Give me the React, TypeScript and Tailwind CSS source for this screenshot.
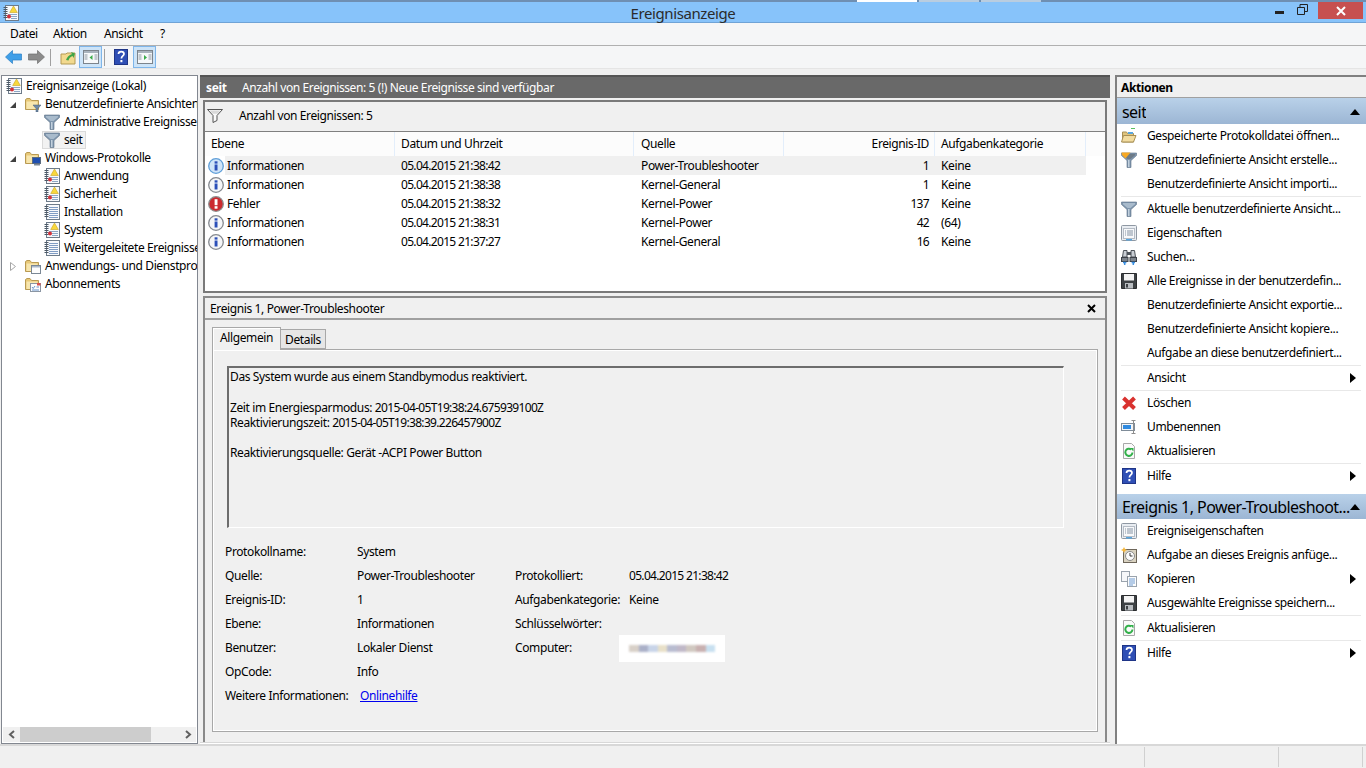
import React from 'react';

const BLUE = '#2b4fb8';

function LogIcon({ alert = false, size = 16 }: { alert?: boolean; size?: number }) {
  return (
    <svg width={size} height={size} viewBox="0 0 16 16" className="shrink-0">
      <rect x="2.5" y="0.5" width="13" height="15" fill="#f7f9fc" stroke="#6d7b8a" />
      <path d="M0.5 2.5h4M0.5 4.5h4M0.5 6.5h4M0.5 8.5h4M0.5 10.5h4M0.5 12.5h4" stroke="#4d5966" />
      {alert ? (
        <>
          <path d="M5 9.5h9M8 11.5h6M8 13.5h6" stroke="#8ea6c4" />
          <path d="M10.5 1l3.800 6.500h-7.600z" fill="#f8d83c" stroke="#c9a21f" strokeWidth="0.6" />
          <circle cx="6" cy="11.500" r="2" fill="#d2313a" />
        </>
      ) : (
        <path d="M5 3.500h9M5 5.500h9M5 7.500h9M5 9.500h9M5 11.500h9M5 13.500h9" stroke="#7f9cc4" />
      )}
    </svg>
  );
}

function FolderBase() {
  return (
    <>
      <path d="M0.5 3.5v10h13v-9h-7l-1.5-2h-3z" fill="#e8c978" stroke="#b99a52" />
      <rect x="1.5" y="5.5" width="11" height="7.5" fill="#f7e6ae" />
    </>
  );
}

function FolderFilter() {
  return (
    <svg width="16" height="16" viewBox="0 0 16 16" className="shrink-0">
      <FolderBase />
      <path d="M8 9h8l-3 3.5V16h-2v-3.5z" fill="#6f8aa6" stroke="#485e75" strokeWidth="0.5" />
    </svg>
  );
}

function FolderPc() {
  return (
    <svg width="16" height="16" viewBox="0 0 16 16" className="shrink-0">
      <FolderBase />
      <rect x="7.5" y="7.5" width="8" height="6" fill="#1f4fb0" stroke="#5a6b80" />
      <rect x="9" y="14" width="6" height="1.5" fill="#7d8894" />
    </svg>
  );
}

function FolderWin() {
  return (
    <svg width="16" height="16" viewBox="0 0 16 16" className="shrink-0">
      <FolderBase />
      <rect x="6.5" y="7.5" width="9" height="8" fill="#fdfdfd" stroke="#7a8794" />
      <rect x="7" y="8" width="8" height="1.5" fill="#a9b8c9" />
    </svg>
  );
}

function FolderCal() {
  return (
    <svg width="16" height="16" viewBox="0 0 16 16" className="shrink-0">
      <FolderBase />
      <rect x="5.5" y="7.5" width="10" height="8" fill="#fdfdfd" stroke="#8b96a3" />
      <rect x="12" y="7" width="3.5" height="2.5" fill="#d9534f" />
      <path d="M7 11l1.2 1.5L10 10M11.5 11h2.5M7 14h7" stroke="#3f77bd" strokeWidth="0.8" fill="none" />
    </svg>
  );
}

function Funnel({ orange = false, dim = false }: { orange?: boolean; dim?: boolean }) {
  if (dim) {
    return (
      <svg width="16" height="16" viewBox="0 0 16 16" className="shrink-0">
        <path d="M0.5 1.5h15l-5.5 6v5l-4 2v-7z" fill="#fafafa" stroke="#555" />
        <path d="M2.5 2.5h11l-3 3.3h-5z" fill="#d9d9d9" />
      </svg>
    );
  }
  return (
    <svg width="16" height="16" viewBox="0 0 16 16" className="shrink-0">
      <path d="M0.5 1h15v2.500L10 8.500v7H6v-7L0.500 3.500z" fill="#7f96ad" stroke="#5d7186" strokeWidth="0.6" />
      <path d="M2 2h12v1.200L9.500 7h-3L2 3.200z" fill={orange ? '#6d7a87' : '#a9bbcc'} />
      <path d="M7 8h1.500v7H7z" fill="#c2d0dd" />
      {orange && <path d="M0.500 0.500h9L7 3.500 4.500 6.500 1 3z" fill="#f7a823" />}
    </svg>
  );
}

function InfoIcon({ active = false }: { active?: boolean }) {
  return (
    <svg width="16" height="16" viewBox="0 0 16 16" className="shrink-0">
      <circle cx="8" cy="8" r="7.300" fill={active ? '#cfe4f8' : '#f5f6f8'} stroke={active ? '#5f9ed8' : '#85898f'} strokeWidth="1.300" />
      <rect x="6.600" y="6.500" width="2.900" height="6" fill={BLUE} />
      <rect x="6.600" y="3.300" width="2.900" height="2.300" fill={BLUE} />
    </svg>
  );
}

function ErrorIcon() {
  return (
    <svg width="16" height="16" viewBox="0 0 16 16" className="shrink-0">
      <circle cx="8" cy="8" r="7.300" fill="#cb2a2f" stroke="#8d8d8d" strokeWidth="1.300" />
      <rect x="6.600" y="3.200" width="2.900" height="6" fill="#fff" />
      <rect x="6.600" y="10.200" width="2.900" height="2.500" fill="#fff" />
    </svg>
  );
}

function HelpIcon() {
  return (
    <svg width="16" height="16" viewBox="0 0 16 16" className="shrink-0">
      <rect x="1.5" y="0.5" width="13" height="15" fill="#2f4fb5" stroke="#1f3587" />
      <path d="M5.5 5c0-3.2 5.5-3.2 5.5 0 0 2-2.6 2-2.6 4.5" fill="none" stroke="#fff" strokeWidth="1.7" />
      <rect x="7.4" y="11" width="2" height="2.2" fill="#fff" />
    </svg>
  );
}

function RefreshIcon() {
  return (
    <svg width="16" height="16" viewBox="0 0 16 16" className="shrink-0">
      <path d="M2.5 0.5h8l3 3v12h-11z" fill="#fafafa" stroke="#a8a8a8" />
      <path d="M11.500 9.500a3.600 3.600 0 1 1-1.300-3" fill="none" stroke="#32b04a" strokeWidth="2" />
      <path d="M9 5h3.500v3.500z" fill="#32b04a" />
    </svg>
  );
}

function PropsIcon() {
  return (
    <svg width="16" height="16" viewBox="0 0 16 16" className="shrink-0">
      <rect x="0.5" y="0.5" width="15" height="15" rx="1" fill="#e9edf2" stroke="#8f98a3" />
      <rect x="2.5" y="3.5" width="11" height="10" fill="#f8f9fb" stroke="#b5bcc5" />
      <path d="M4 6h1M6 6h6M4 8h1M6 8h6M4 10h1M6 10h6" stroke="#8593a3" />
      <rect x="5" y="14" width="6" height="1.5" fill="#58a6df" />
    </svg>
  );
}

function OpenIcon() {
  return (
    <svg width="16" height="16" viewBox="0 0 16 16" className="shrink-0">
      <path d="M1.500 4v10h11V5.500H6.500L5.500 4z" fill="#e0c47c" stroke="#a78f55" />
      <path d="M0.500 14l2-6.500h12.500l-2.500 6.500z" fill="#f2dca0" stroke="#a78f55" />
      <rect x="7" y="4" width="5" height="2" fill="#58a6df" />
      <rect x="10" y="0" width="4" height="1" fill="#58c060" />
    </svg>
  );
}

function FloppyIcon() {
  return (
    <svg width="16" height="16" viewBox="0 0 16 16" className="shrink-0">
      <path d="M0.500 0.500h15v15h-15z" fill="#3d4144" stroke="#2a2c2e" />
      <rect x="3" y="1" width="10" height="6.500" fill="#f4f4f4" />
      <rect x="4" y="10" width="8" height="5.500" fill="#b9bdc1" />
      <rect x="5" y="11" width="2" height="3.500" fill="#3d4144" />
    </svg>
  );
}

function BinocularsIcon() {
  return (
    <svg width="16" height="16" viewBox="0 0 16 16" className="shrink-0">
      <path d="M1.500 8l1-6.500h3.500V8zM14.500 8l-1-6.500H10V8z" fill="#c9ced4" stroke="#4d535a" />
      <rect x="6" y="3" width="4" height="3" fill="#4d535a" />
      <rect x="0.500" y="8.500" width="6.500" height="4" fill="#7d848c" stroke="#3d4249" />
      <rect x="9" y="8.500" width="6.500" height="4" fill="#7d848c" stroke="#3d4249" />
      <path d="M3.700 16v-3M2 13.500h3.400M12.300 16v-3M10.600 13.500h3.400" stroke="#3a8fe0" strokeWidth="1.500" />
    </svg>
  );
}

function DeleteIcon() {
  return (
    <svg width="16" height="16" viewBox="0 0 16 16" className="shrink-0">
      <path d="M2.500 3l11 10.500M13.500 3L2.500 13.500" stroke="#d9322f" strokeWidth="4" />
    </svg>
  );
}

function RenameIcon() {
  return (
    <svg width="16" height="16" viewBox="0 0 16 16" className="shrink-0">
      <rect x="0.500" y="4.500" width="13" height="7" fill="#f2f5f8" stroke="#7f8c99" />
      <rect x="2" y="6" width="8" height="4" fill="#2f8ae0" />
      <path d="M10.500 1.500h4M12.500 1.500v13M10.500 14.500h4" stroke="#8d8d8d" fill="none" />
    </svg>
  );
}

function TaskIcon() {
  return (
    <svg width="16" height="16" viewBox="0 0 16 16" className="shrink-0">
      <rect x="2.500" y="2.500" width="13" height="13" fill="#d9d2c0" stroke="#6e665a" />
      <circle cx="9" cy="9" r="4.500" fill="#fbfbfb" stroke="#8a8a8a" />
      <path d="M9 6v3h2.500" stroke="#3a3a3a" fill="none" />
      <path d="M3 0l1 2 2 1-2 1-1 2-1-2-2-1 2-1z" fill="#f6b73c" />
    </svg>
  );
}

function CopyIcon() {
  return (
    <svg width="16" height="16" viewBox="0 0 16 16" className="shrink-0">
      <rect x="0.500" y="0.500" width="8" height="10" fill="#f6f7f9" stroke="#9aa3ad" />
      <rect x="6.500" y="5.500" width="9" height="10" fill="#fbfcfd" stroke="#9aa3ad" />
      <path d="M8 8h6M8 10h6M8 12h6M8 14h4" stroke="#6f9bd1" />
    </svg>
  );
}

function PaneIcon({ right = false }: { right?: boolean }) {
  return (
    <svg width="16" height="14" viewBox="0 0 16 14" className="shrink-0">
      <rect x="0.500" y="0.500" width="15" height="13" fill="#f6f8fa" stroke="#7c848c" />
      <rect x="1" y="1" width="14" height="2" fill="#a9b3bd" />
      <path d="M1.500 5h3M1.500 7h3M1.500 9h3M11.500 5h3M11.500 7h3M11.500 9h3" stroke="#8f99a3" />
      <path d={right ? 'M7 5l3 2.500L7 10z' : 'M9.500 5l-3 2.500 3 2.500z'} fill="#3bab4a" />
    </svg>
  );
}

function NavArrow({ left = false }: { left?: boolean }) {
  return (
    <svg width="17" height="14" viewBox="0 0 17 14" className="shrink-0">
      <path
        d={left ? 'M0.500 7L7.500 0.500v3.500h9v6h-9v3.500z' : 'M16.500 7L9.500 0.500v3.500h-9v6h9v3.500z'}
        fill={left ? '#3f9fe8' : '#8b8b8b'}
        stroke={left ? '#2b7fc4' : '#6f6f6f'}
        strokeWidth="0.7"
      />
    </svg>
  );
}

function UpFolderIcon() {
  return (
    <svg width="16" height="16" viewBox="0 0 16 16" className="shrink-0">
      <path d="M1 5h5l1-1h8v11H1z" fill="#f2d98e" stroke="#b39a55" />
      <path d="M6 11c1-3 3-5 6-6l-1-2 4 1.500L13.500 9l-1-2c-2 1-3.500 2-4 4.500z" fill="#3fa548" />
    </svg>
  );
}

function Expander({ open = false }: { open?: boolean }) {
  return (
    <svg width="8" height="9" viewBox="0 0 8 9" className="shrink-0">
      {open ? <path d="M1 8h6V2z" fill="#404040" /> : <path d="M1.500 0.500l5 4-5 4z" fill="#fff" stroke="#a6a6a6" />}
    </svg>
  );
}

// digits in the reference font run narrower than the rest of the text
function Num({ children }: { children: React.ReactNode }) {
  return <span className="tracking-[-0.68px]">{children}</span>;
}

function TreeRow({
  level,
  icon,
  label,
  open,
  selected,
}: {
  level: 0 | 1 | 2;
  icon: React.ReactNode;
  label: string;
  open?: boolean;
  selected?: boolean;
}) {
  const indent = level === 0 ? 'pl-[2px]' : level === 1 ? 'pl-[7px]' : 'pl-[40px]';
  return (
    <div className={`flex h-[18px] items-center whitespace-nowrap ${indent}`}>
      {level === 1 && (
        <span className="mr-[6px] flex w-[8px] justify-center">{open !== undefined && <Expander open={open} />}</span>
      )}
      <span className={`flex h-[18px] items-center gap-[4px] border pl-[1px] pr-[3px] ${selected ? 'border-[#dadada] bg-[#f2f2f2]' : 'border-transparent'}`}>
        {icon}
        <span className="leading-[16px]">{label}</span>
      </span>
    </div>
  );
}

function ToolButton({ children }: { children: React.ReactNode }) {
  return (
    <span className="flex h-[22px] w-[23px] items-center justify-center border border-[#7fb6ea] bg-[#cde4f8]">{children}</span>
  );
}

function Pane() {
  return (
    <div className="ml-[1px] flex w-[197px] flex-col overflow-hidden border border-[#828790] bg-white">
      <div className="min-h-0 flex-1 overflow-hidden pt-[1px]">
        <TreeRow level={0} icon={<LogIcon alert />} label="Ereignisanzeige (Lokal)" />
        <TreeRow level={1} open icon={<FolderFilter />} label="Benutzerdefinierte Ansichten" />
        <TreeRow level={2} icon={<Funnel />} label="Administrative Ereignisse" />
        <TreeRow level={2} selected icon={<Funnel />} label="seit" />
        <TreeRow level={1} open icon={<FolderPc />} label="Windows-Protokolle" />
        <TreeRow level={2} icon={<LogIcon alert />} label="Anwendung" />
        <TreeRow level={2} icon={<LogIcon alert />} label="Sicherheit" />
        <TreeRow level={2} icon={<LogIcon />} label="Installation" />
        <TreeRow level={2} icon={<LogIcon alert />} label="System" />
        <TreeRow level={2} icon={<LogIcon />} label="Weitergeleitete Ereignisse" />
        <TreeRow level={1} open={false} icon={<FolderWin />} label="Anwendungs- und Dienstprotokolle" />
        <TreeRow level={1} icon={<FolderCal />} label="Abonnements" />
      </div>
      <div className="mx-[1px] mb-[1px] flex h-[15px] items-center bg-[#f0f0f0]">
        <span className="flex w-[17px] justify-center">
          <svg width="8" height="9" viewBox="0 0 8 9"><path d="M6 1L2 4.500 6 8" fill="none" stroke="#606060" strokeWidth="2" /></svg>
        </span>
        <span className="h-full w-[131px] bg-[#cdcdcd]" />
        <span className="flex-1" />
        <span className="flex w-[17px] justify-center">
          <svg width="8" height="9" viewBox="0 0 8 9"><path d="M2 1l4 3.500L2 8" fill="none" stroke="#606060" strokeWidth="2" /></svg>
        </span>
      </div>
    </div>
  );
}

const EVENTS = [
  { level: 'Informationen', date: '05.04.2015 21:38:42', source: 'Power-Troubleshooter', id: '1', cat: 'Keine' },
  { level: 'Informationen', date: '05.04.2015 21:38:38', source: 'Kernel-General', id: '1', cat: 'Keine' },
  { level: 'Fehler', date: '05.04.2015 21:38:32', source: 'Kernel-Power', id: '137', cat: 'Keine' },
  { level: 'Informationen', date: '05.04.2015 21:38:31', source: 'Kernel-Power', id: '42', cat: '(64)' },
  { level: 'Informationen', date: '05.04.2015 21:37:27', source: 'Kernel-General', id: '16', cat: 'Keine' },
];

function EventList() {
  return (
    <div className="mx-[3px] mt-[2px] flex h-[193px] flex-col border-2 border-[#7a7a7a] bg-white">
      <div className="flex h-[30px] items-center gap-[16px] border-b border-[#808080] bg-[#f0f0f0] pb-[1px] pl-[2px]">
        <Funnel dim />
        <span>Anzahl von Ereignissen: 5</span>
      </div>
      <div className="grid h-[24px] grid-cols-[190px_239px_150px_151px_151px] items-center bg-[#fcfcfc]">
        <span className="h-full border-r border-[#e3eefb] pl-[6px] leading-[24px]">Ebene</span>
        <span className="h-full border-r border-[#e3eefb] pl-[6px] leading-[24px]">Datum und Uhrzeit</span>
        <span className="h-full border-r border-[#e3eefb] pl-[7px] leading-[24px]">Quelle</span>
        <span className="h-full border-r border-[#e3eefb] pr-[5px] text-right leading-[24px]">Ereignis-ID</span>
        <span className="h-full border-r border-[#e3eefb] pl-[6px] leading-[24px]">Aufgabenkategorie</span>
      </div>
      {EVENTS.map((e, i) => (
        <div key={i} className="flex h-[19px] items-center">
          <span className="flex w-[20px] justify-end pr-[1px]">
            {e.level === 'Fehler' ? <ErrorIcon /> : <InfoIcon active={i === 0} />}
          </span>
          <div className={`grid h-full grid-cols-[170px_239px_150px_151px_151px] items-center ${i === 0 ? 'bg-[#f0f0f0]' : ''}`}>
            <span className="pl-[2px]">{e.level}</span>
            <span className="pl-[6px]"><Num>{e.date}</Num></span>
            <span className="pl-[7px]">{e.source}</span>
            <span className="pr-[6px] text-right"><Num>{e.id}</Num></span>
            <span className="pl-[6px]">{e.cat}</span>
          </div>
        </div>
      ))}
    </div>
  );
}

function Field({ label, value, link }: { label: string; value?: string; link?: boolean }) {
  return (
    <div className="flex h-[24px] items-center">
      <span className="w-[132px] shrink-0">{label}</span>
      {link ? (
        <span className="ml-[3px] text-[#0000ee] underline">{value}</span>
      ) : (
        <span>{value}</span>
      )}
    </div>
  );
}

function RightField({ label, value }: { label: string; value?: React.ReactNode }) {
  return (
    <div className="flex h-[24px] items-center">
      <span className="w-[114px] shrink-0">{label}</span>
      <span>{value}</span>
    </div>
  );
}

const BLUR_BITS = ['#d8d0c8', '#aab0c8', '#c8d4e8', '#e8e0c8', '#b8bcd0', '#c0b8c8', '#d0c8c0', '#c8b0b0', '#c8e0f0'];

function EventDetail() {
  return (
    <div className="mx-[3px] mt-[3px] flex min-h-0 flex-1 flex-col border-x-2 border-t-2 border-[#8a8a8a] bg-[#f0f0f0]">
      <div className="flex h-[22px] shrink-0 items-center justify-between border-b-2 border-[#a0a0a0] pl-[5px] pr-[9px] pt-[1px]">
        <span>Ereignis 1, Power-Troubleshooter</span>
        <svg width="9" height="9" viewBox="0 0 9 9"><path d="M1 1l7 7M8 1L1 8" stroke="#000" strokeWidth="2" /></svg>
      </div>
      <div className="ml-[7px] mt-[6px] flex h-[23px] shrink-0 items-end">
        <span className="z-10 -mb-[1px] flex h-[23px] w-[69px] items-center justify-center border border-b-0 border-[#a8a8a8] bg-[#f0f0f0] pb-[2px] shadow-[inset_1px_1px_0_#fff]">Allgemein</span>
        <span className="flex h-[20px] w-[45px] items-center justify-center border border-l-0 border-[#a8a8a8] bg-[#e6e6e6] pt-[1px]">Details</span>
      </div>
      <div className="ml-[7px] mr-[7px] flex h-[383px] shrink-0 flex-col border border-[#a8a8a8] bg-[#f0f0f0] shadow-[inset_1px_1px_0_#fff,inset_-1px_-1px_0_#fff]">
        <div className="ml-[14px] mr-[33px] mt-[16px] h-[162px] shrink-0 border-b border-l-2 border-r border-t-2 border-b-white border-l-[#6d6d6d] border-r-white border-t-[#6d6d6d] pl-[1px] pt-[1px] leading-[15px]">
          <div>Das System wurde aus einem Standbymodus reaktiviert.</div>
          <div className="mt-[16px]">Zeit im Energiesparmodus: <Num>2015-04-05T19:38:24.675939100Z</Num></div>
          <div>Reaktivierungszeit: <Num>2015-04-05T19:38:39.226457900Z</Num></div>
          <div className="mt-[15px]">Reaktivierungsquelle: Gerät -ACPI Power Button</div>
        </div>
        <div className="ml-[12px] mt-[12px] flex">
          <div className="w-[290px]">
            <Field label="Protokollname:" value="System" />
            <Field label="Quelle:" value="Power-Troubleshooter" />
            <Field label="Ereignis-ID:" value="1" />
            <Field label="Ebene:" value="Informationen" />
            <Field label="Benutzer:" value="Lokaler Dienst" />
            <Field label="OpCode:" value="Info" />
            <Field label="Weitere Informationen:" value="Onlinehilfe" link />
          </div>
          <div className="pt-[24px]">
            <RightField label="Protokolliert:" value={<Num>05.04.2015 21:38:42</Num>} />
            <RightField label="Aufgabenkategorie:" value="Keine" />
            <RightField label="Schlüsselwörter:" />
            <div className="flex h-[24px] items-center">
              <span className="w-[104px] shrink-0">Computer:</span>
              <span className="flex h-[27px] w-[106px] items-center justify-center bg-white">
                <span className="flex h-[7px] w-[86px] blur-[1px]">
                  {BLUR_BITS.map((c, i) => (
                    <span key={i} className="flex-1" style={{ backgroundColor: c }} />
                  ))}
                </span>
              </span>
            </div>
          </div>
        </div>
      </div>
    </div>
  );
}

function Action({ icon, label, sub, sep }: { icon?: React.ReactNode; label: string; sub?: boolean; sep?: boolean }) {
  return (
    <>
      <div className="flex h-[24px] items-center pl-[4px] pr-[10px]">
        <span className="flex w-[26px] shrink-0 items-center">{icon}</span>
        <span className="flex-1 truncate">{label}</span>
        {sub && <svg width="6" height="10" viewBox="0 0 6 10"><path d="M0 0l6 5-6 5z" fill="#000" /></svg>}
      </div>
      {sep && <div className="ml-[4px] mr-[5px] h-px bg-[#e8e8e8]" />}
    </>
  );
}

function SectionHeader({ label, tall }: { label: string; tall?: boolean }) {
  return (
    <div className={`flex items-center justify-between bg-gradient-to-b from-[#b9d1e9] to-[#9cb6d4] pl-[5px] pr-[6px] text-[16px] tracking-[-0.55px] ${tall ? 'h-[26px] pt-[2px]' : 'h-[25px]'}`}>
      <span className="truncate">{label}</span>
      <svg width="10" height="6" viewBox="0 0 10 6" className="shrink-0"><path d="M5 0l5 6H0z" fill="#000" /></svg>
    </div>
  );
}

function ActionsPane() {
  return (
    <div className="ml-[5px] flex w-[251px] flex-col border-l-2 border-t-2 border-[#808080] bg-white">
      <div className="flex h-[21px] items-center border-b border-[#a0a0a0] bg-[#f0f0f0] pl-[4px] pt-[1px] font-bold">Aktionen</div>
      <SectionHeader tall label="seit" />
      <div>
        <Action icon={<OpenIcon />} label="Gespeicherte Protokolldatei öffnen..." />
        <Action icon={<Funnel orange />} label="Benutzerdefinierte Ansicht erstelle..." />
        <Action label="Benutzerdefinierte Ansicht importi..." sep />
        <Action icon={<Funnel />} label="Aktuelle benutzerdefinierte Ansicht..." />
        <Action icon={<PropsIcon />} label="Eigenschaften" />
        <Action icon={<BinocularsIcon />} label="Suchen..." />
        <Action icon={<FloppyIcon />} label="Alle Ereignisse in der benutzerdefin..." />
        <Action label="Benutzerdefinierte Ansicht exportie..." />
        <Action label="Benutzerdefinierte Ansicht kopiere..." />
        <Action label="Aufgabe an diese benutzerdefiniert..." sep />
        <Action label="Ansicht" sub sep />
        <Action icon={<DeleteIcon />} label="Löschen" />
        <Action icon={<RenameIcon />} label="Umbenennen" />
        <Action icon={<RefreshIcon />} label="Aktualisieren" sep />
        <Action icon={<HelpIcon />} label="Hilfe" sub />
      </div>
      <div className="mt-[6px]">
        <SectionHeader label="Ereignis 1, Power-Troubleshoot..." />
      </div>
      <Action icon={<PropsIcon />} label="Ereigniseigenschaften" />
      <Action icon={<TaskIcon />} label="Aufgabe an dieses Ereignis anfüge..." />
      <Action icon={<CopyIcon />} label="Kopieren" sub />
      <Action icon={<FloppyIcon />} label="Ausgewählte Ereignisse speichern..." sep />
      <Action icon={<RefreshIcon />} label="Aktualisieren" sep />
      <Action icon={<HelpIcon />} label="Hilfe" sub />
    </div>
  );
}

export default function App() {
  return (
    <div className="flex h-[768px] w-[1366px] flex-col overflow-hidden bg-[#f0f0f0] font-['Noto_Sans',sans-serif] text-[12px] tracking-[-0.38px] text-[#000]">
      {/* Title bar */}
      <div className="h-[23px] shrink-0 border-b border-[#6fa3d6] bg-[#87c3fa]">
        <div className="flex h-[2px] bg-[#6f8fb2] pl-[857px]">
          <span className="w-[60px] bg-white" />
          <span className="ml-[2px] w-[60px] bg-[#b9cde0]" />
          <span className="ml-[2px] w-[60px] bg-[#b9cde0]" />
        </div>
        <div className="grid h-[20px] grid-cols-[1fr_auto_1fr] items-center">
          <span className="pl-[3px]"><LogIcon alert /></span>
          <span className="text-[15px] tracking-[-0.4px] text-[#2b2b2b]">Ereignisanzeige</span>
          <div className="flex h-full items-start justify-end pr-[3px]">
            <svg width="9" height="4" viewBox="0 0 9 4" className="mr-[13px] mt-[9px]"><rect width="9" height="3" fill="#222" /></svg>
            <svg width="11" height="11" viewBox="0 0 11 11" className="mr-[10px] mt-[2px]"><path d="M0.500 3.500h7v7h-7zM3 3V0.500h7.500v7H8" fill="none" stroke="#222" /></svg>
            <span className="flex h-[17px] w-[45px] items-center justify-center bg-[#c75050]">
              <svg width="10" height="10" viewBox="0 0 10 10"><path d="M1 1l8 8M9 1l-8 8" stroke="#fff" strokeWidth="2" /></svg>
            </span>
          </div>
        </div>
      </div>

      {/* Menu bar */}
      <div className="flex h-[23px] shrink-0 items-center border-b border-[#b0b0b0] bg-[#f5f6f7] pl-[10px]">
        <span className="w-[43px]">Datei</span>
        <span className="w-[51px]">Aktion</span>
        <span className="w-[56px]">Ansicht</span>
        <span>?</span>
      </div>

      {/* Toolbar */}
      <div className="flex h-[23px] shrink-0 items-center border-b border-[#e5e5e5] bg-[#f5f6f7] pl-[5px]">
        <NavArrow left />
        <span className="ml-[6px]"><NavArrow /></span>
        <span className="ml-[5px] h-[17px] w-px bg-[#a0a0a0]" />
        <span className="ml-[9px]"><UpFolderIcon /></span>
        <span className="ml-[3px]"><ToolButton><PaneIcon /></ToolButton></span>
        <span className="ml-[2px] h-[17px] w-px bg-[#a0a0a0]" />
        <span className="ml-[8px]"><HelpIcon /></span>
        <span className="ml-[4px]"><ToolButton><PaneIcon right /></ToolButton></span>
      </div>

      {/* Body */}
      <div className="flex min-h-0 flex-1 pt-[6px]">
        <Pane />
        <div className="ml-[2px] flex w-[910px] flex-col">
          <div className="flex h-[23px] shrink-0 items-center border-t-2 border-[#555] bg-[#696969] pl-[6px] text-white">
            <span className="w-[36px] font-bold">seit</span>
            <span className="tracking-[-0.4px]">Anzahl von Ereignissen: 5 (!) Neue Ereignisse sind verfügbar</span>
          </div>
          <EventList />
          <EventDetail />
          <div className="h-[2px] shrink-0 border-t border-[#d8d8d8] bg-white" />
        </div>
        <ActionsPane />
      </div>

      {/* Status bar */}
      <div className="flex h-[24px] shrink-0 border-t-2 border-[#d8d8d8] bg-[#f0f0f0] py-[1px]">
        <span className="w-[1145px] border-r border-[#d0d0d0]" />
        <span className="w-[134px] border-r border-[#d0d0d0]" />
        <span className="w-[84px] border-r border-[#d0d0d0]" />
      </div>
    </div>
  );
}
